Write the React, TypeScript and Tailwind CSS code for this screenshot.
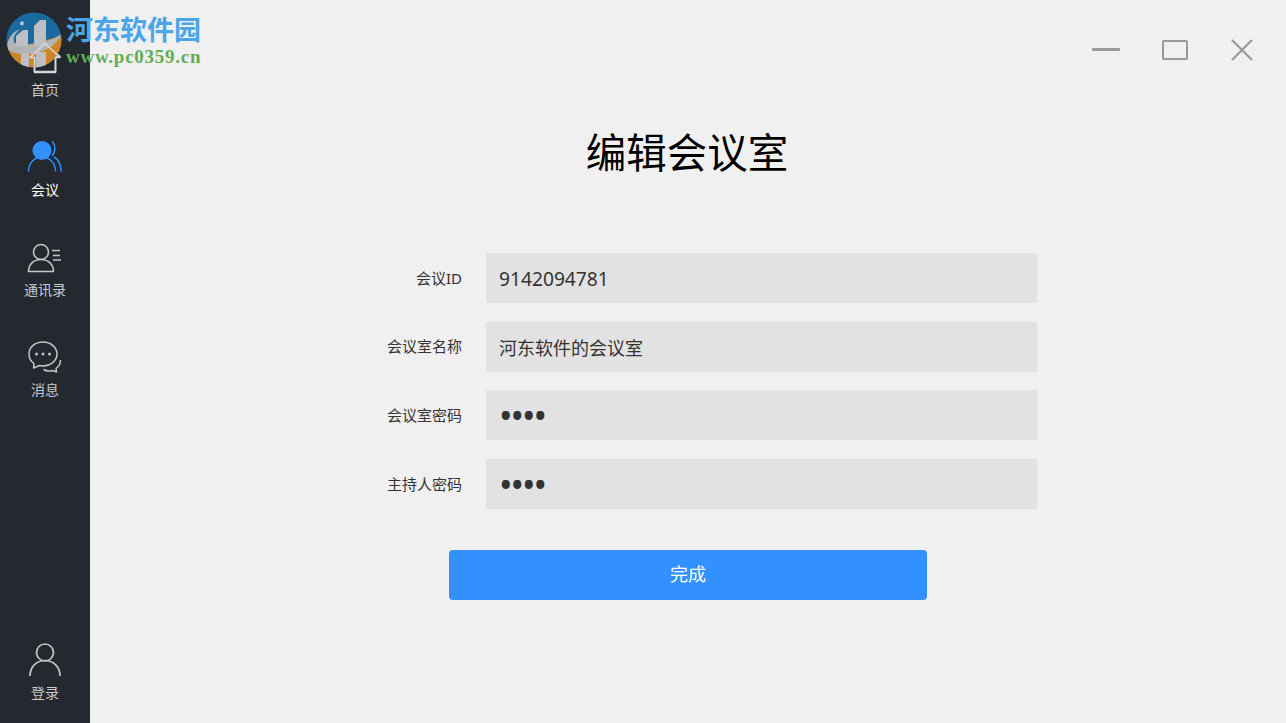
import React from 'react'

const cjk = "font-['Segoe_UI','Noto_Sans','Noto_Sans_CJK_SC',sans-serif]"

function HomeIcon() {
  return (
    <svg width="34" height="32" viewBox="0 0 34 32" fill="none" stroke="#d5d6d7" strokeWidth="1.6" strokeLinejoin="round">
      <path d="M2 15.5 17 1.5l15 14h-4.500V30.500H6.500V15.500Z" />
    </svg>
  )
}

function MeetingIcon() {
  return (
    <svg width="36" height="34" viewBox="0 0 36 34" fill="none">
      <circle cx="15" cy="11.500" r="9.500" fill="#3390ff" />
      <path d="M1.500 32.500C1.500 24 7.500 18 15 18s13.500 6 13.500 14.500" stroke="#3390ff" strokeWidth="1.500" />
      <path d="M25 2.500c3.500 3 4 10 0 14.500M27 18c4.500 2.500 7 8 7 14.500" stroke="#3390ff" strokeWidth="1.500" />
    </svg>
  )
}

function ContactsIcon() {
  return (
    <svg width="36" height="30" viewBox="0 0 36 30" fill="none" stroke="#c4c6c8" strokeWidth="1.500">
      <circle cx="14" cy="9" r="7.500" />
      <path d="M1.500 28.500c0-7 5-12 12.500-12s12.500 5 12.500 12Z" strokeLinejoin="round" />
      <path d="M25 7.500h8M26 12.500h7M26 17h8" />
    </svg>
  )
}

function MessageIcon() {
  return (
    <svg width="34" height="32" viewBox="0 0 34 32" fill="none" stroke="#c4c6c8" strokeWidth="1.500">
      <path d="M15 1C7 1 1 6 1 13c0 4 2 7.500 5 9.500L5.500 27l6-2.500c1 .2 2.300.4 3.500.4 8 0 14-5.400 14-11.900S23 1 15 1Z" strokeLinejoin="round" />
      <path d="M15.500 28.500c2.500 1.500 6 2 9 1l4 1.500-.5-3.500c3-2 4.500-5 4.500-8.500" strokeLinejoin="round" />
      <circle cx="8.500" cy="13" r="1.500" fill="#c4c6c8" stroke="none" />
      <circle cx="15" cy="13" r="1.500" fill="#c4c6c8" stroke="none" />
      <circle cx="21.500" cy="13" r="1.500" fill="#c4c6c8" stroke="none" />
    </svg>
  )
}

function UserIcon() {
  return (
    <svg width="32" height="34" viewBox="0 -1 32 34" fill="none" stroke="#c4c6c8" strokeWidth="1.700">
      <circle cx="16" cy="9.500" r="8.500" />
      <path d="M1 33c0-9 6.500-15.500 15-15.500S31 24 31 33" />
    </svg>
  )
}

function Logo() {
  return (
    <svg width="56" height="56" viewBox="0 0 56 56">
      <defs>
        <clipPath id="logo-clip">
          <circle cx="28" cy="28" r="27.500" />
        </clipPath>
      </defs>
      <g clipPath="url(#logo-clip)">
        <rect width="56" height="56" fill="#1a6ea6" />
        <path d="M0 38 56 24V56H0Z" fill="#d98a26" />
        <path d="M1 36C1 26 7 20 14 17 8 22 6 28 9 31c5 4 31 2 46-9-3 10-15 19-33 20-10 0-18-1-21-6Z" fill="#b9bbbd" />
        <path d="M10 24l7-6h5v16H10Z" fill="#c6c8ca" />
        <path d="M28 14l6-6h6v26H28Z" fill="#c6c8ca" />
        <path d="M15 41h8v15h-8ZM30 40h10v16H30Z" fill="#c6c8ca" />
        <path d="m16 8.500.8 1.700 1.800.3-1.300 1.300.3 1.900-1.600-.9-1.600.9.3-1.900-1.300-1.300 1.800-.3Z" fill="#c8dcea" />
      </g>
    </svg>
  )
}

function NavItem({ icon, label, active }: { icon: React.ReactNode; label: string; active?: boolean }) {
  return (
    <div className="h-[100px] flex flex-col items-center justify-end pb-[1px]">
      <div className="h-[36px] flex items-end justify-center">{icon}</div>
      <span className={`mt-[8px] text-[14px] leading-[18px] ${active ? 'text-white' : 'text-[#c9cbcd]'}`}>{label}</span>
    </div>
  )
}

function Field({ label, value, inputClass, type }: { label: string; value: string; inputClass: string; type?: string }) {
  return (
    <div className="flex items-center gap-[24px]">
      <label className="w-[100px] text-right text-[15px] text-[#333333]">{label}</label>
      <input
        readOnly
        type={type ?? 'text'}
        value={value}
        className={`w-[551px] h-[50px] bg-[#e2e2e2] px-[13px] text-[#333333] outline-none ${inputClass} ${cjk}`}
      />
    </div>
  )
}

export default function App() {
  return (
    <div className={`relative flex h-[723px] w-[1286px] overflow-hidden bg-[#f0f0f0] ${cjk}`}>
      {/* Sidebar */}
      <div className="w-[90px] flex-shrink-0 bg-[#24282f] flex flex-col justify-between pb-[20px]">
        <div>
          <NavItem icon={<HomeIcon />} label="首页" />
          <NavItem icon={<MeetingIcon />} label="会议" active />
          <NavItem icon={<ContactsIcon />} label="通讯录" />
          <NavItem icon={<MessageIcon />} label="消息" />
        </div>
        <NavItem icon={<UserIcon />} label="登录" />
      </div>

      {/* Main */}
      <div className="flex-1 flex flex-col">
        <div className="flex justify-end items-center gap-[42px] pt-[38px] pr-[32px] h-[61px]">
          <div className="w-[28px] h-[3px] bg-[#999999] rounded-[1px]" />
          <div className="w-[26px] h-[20px] border-2 border-[#999999] rounded-[2px]" />
          <svg width="24" height="24" viewBox="0 0 24 24" stroke="#999999" strokeWidth="2.200">
            <path d="M2 2 22 22M22 2 2 22" />
          </svg>
        </div>

        <h1 className="mt-[62px] -ml-[2px] text-center text-[40.500px] leading-[60px] font-normal text-black">编辑会议室</h1>

        <div className="mt-[70px] ml-[272px] flex flex-col gap-[18.67px]">
          <Field label="会议ID" value="9142094781" inputClass="text-[19.200px]" />
          <Field label="会议室名称" value="河东软件的会议室" inputClass="text-[18px]" />
          <Field label="会议室密码" value="1234" type="password" inputClass="text-[36px] tracking-[-2px] pt-[2px]" />
          <Field label="主持人密码" value="1234" type="password" inputClass="text-[36px] tracking-[-2px] pt-[2px]" />
        </div>

        <button className="mt-[41px] ml-[359px] w-[478px] h-[50px] rounded-[4px] bg-[#3390ff] text-[18px] text-white">
          完成
        </button>
      </div>

      {/* Watermark */}
      <div className="absolute left-[5.500px] top-[12px] opacity-95 pointer-events-none">
        <Logo />
      </div>
      <div className="absolute left-[28px] top-[42px]">
        <HomeIcon />
      </div>
      <div className="absolute left-[66px] top-[10px] pointer-events-none">
        <div className="text-[27px] leading-[38px] font-bold text-[#4aa6e8] font-['Noto_Sans_CJK_SC',sans-serif]">河东软件园</div>
        <div className="text-[19px] leading-[17px] font-bold text-[#62ad55] tracking-[0.75px] font-['Liberation_Serif',serif]">www.pc0359.cn</div>
      </div>
    </div>
  )
}
